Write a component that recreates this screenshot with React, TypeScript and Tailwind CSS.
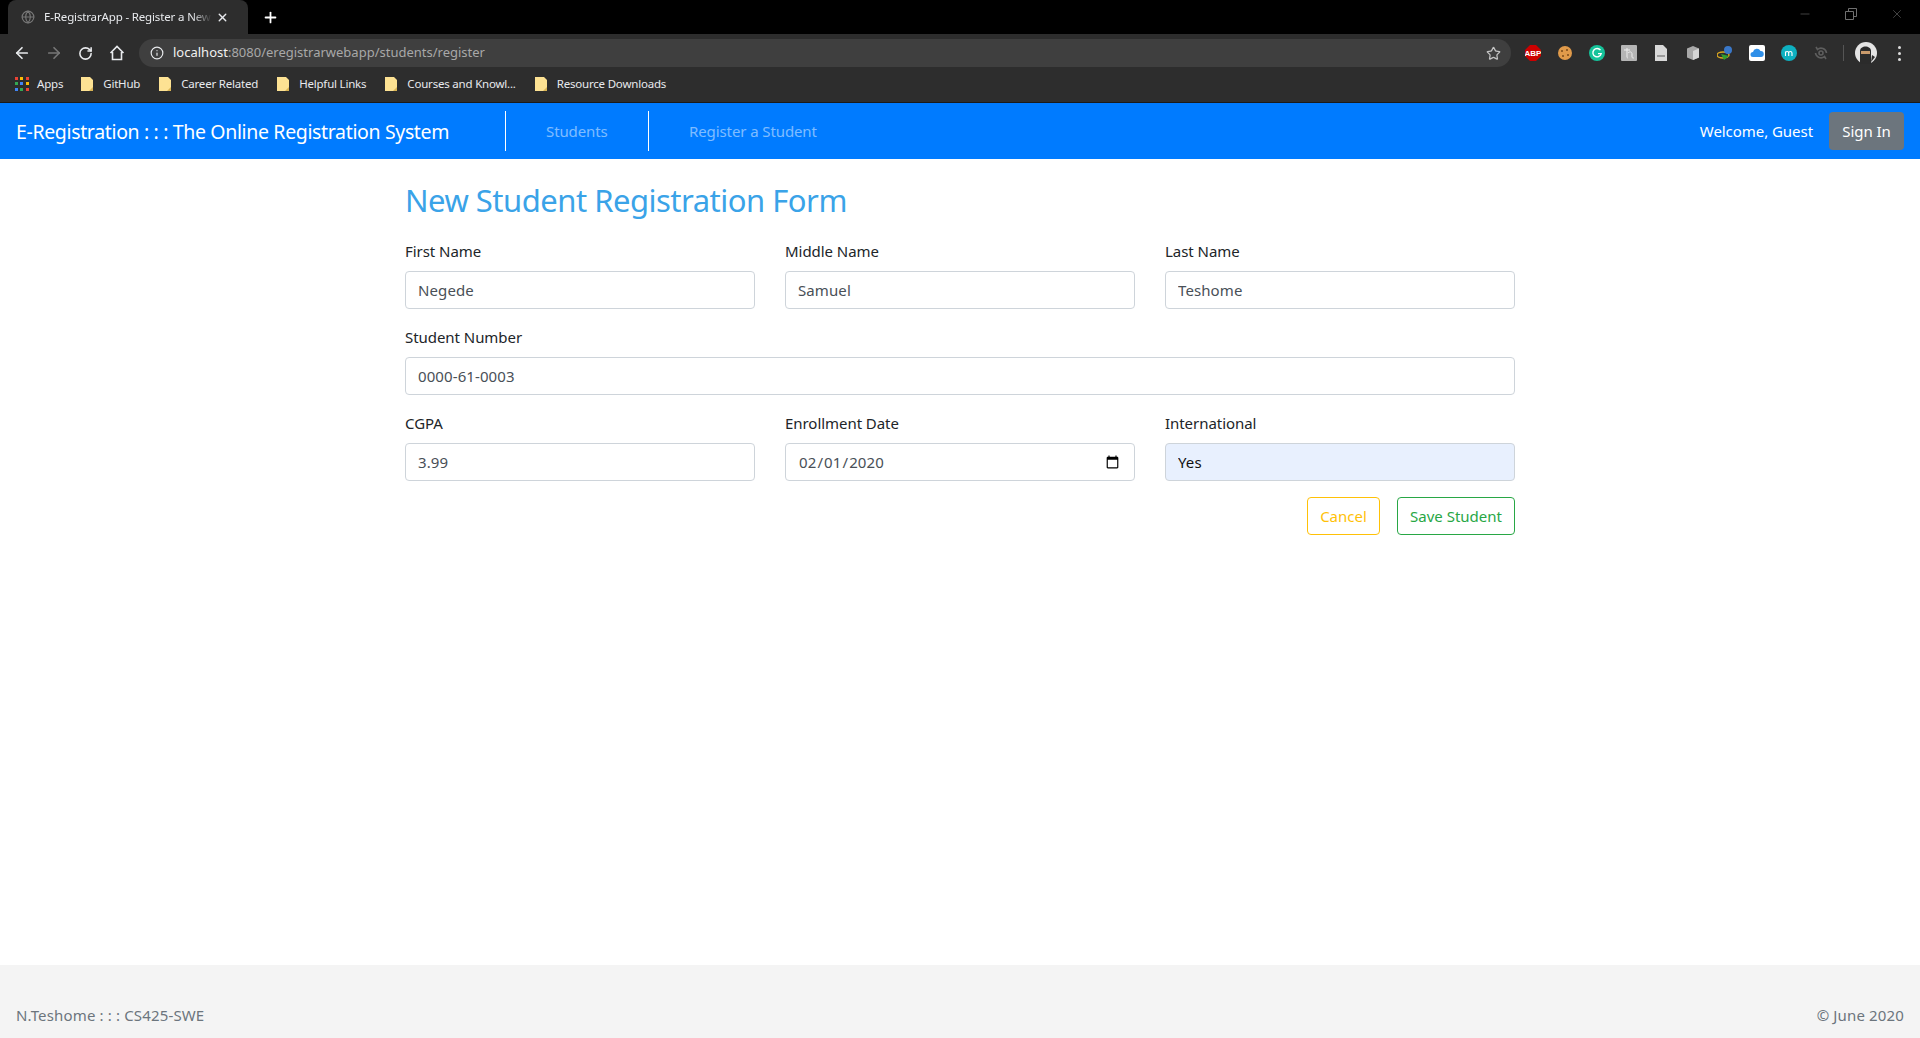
import { ArrowLeft, ArrowRight, RotateCw, Info, Star, X, Plus, Minus, Globe } from "lucide-react";

const bookmarks = ["GitHub", "Career Related", "Helpful Links", "Courses and Knowl...", "Resource Downloads"];

function Folder() {
  return (
    <svg width="12" height="14" viewBox="0 0 12 14" className="shrink-0">
      <path d="M0 0h9l3 3v11H0z" fill="#fde293" />
      <path d="M12 10v4H8z" fill="#d9b454" />
    </svg>
  );
}

function AppsGrid() {
  const colors = ["#ea4335", "#fbbc04", "#ea4335", "#34a853", "#4285f4", "#fbbc04", "#4285f4", "#34a853", "#ea4335"];
  return (
    <div className="grid grid-cols-3 gap-[2px] w-[14px] h-[14px] shrink-0">
      {colors.map((c, i) => (
        <span key={i} className="w-[3px] h-[3px]" style={{ backgroundColor: c }} />
      ))}
    </div>
  );
}

function ExtensionIcons() {
  return (
    <div className="flex items-center gap-[16px] ml-[14px]">
      <svg width="16" height="16" viewBox="0 0 16 16">
        <path d="M5 0h6l5 5v6l-5 5H5l-5-5V5z" fill="#c00" />
        <text x="8" y="11" textAnchor="middle" fontSize="8" fontWeight="700" fill="#fff" fontFamily="Liberation Sans">ABP</text>
      </svg>
      <svg width="16" height="16" viewBox="0 0 16 16">
        <circle cx="8" cy="8" r="7" fill="#e09a4a" />
        <circle cx="5" cy="6" r="1" fill="#7a4a1a" />
        <circle cx="10" cy="5" r="1" fill="#7a4a1a" />
        <circle cx="11" cy="10" r="1" fill="#7a4a1a" />
        <circle cx="6" cy="11" r="1" fill="#7a4a1a" />
      </svg>
      <svg width="16" height="16" viewBox="0 0 16 16">
        <circle cx="8" cy="8" r="8" fill="#15c39a" />
        <path d="M11.500 5.200A4.200 4.200 0 1 0 12.200 8.600H9" fill="none" stroke="#fff" strokeWidth="1.400" />
      </svg>
      <svg width="16" height="16" viewBox="0 0 16 16">
        <rect width="16" height="16" rx="1" fill="#b5b5b5" />
        <path d="M3 5h6M6 3v9c0 1 1 1 1 1M7 8c2-2 4-1 4 1v3c0 1 1 1 2 1" fill="none" stroke="#eee" strokeWidth="1" />
      </svg>
      <svg width="16" height="16" viewBox="0 0 16 16">
        <path d="M2 0h8l4 4v12H2z" fill="#d8d8d8" />
        <rect x="4" y="10" width="8" height="2" fill="#9a9a9a" />
      </svg>
      <svg width="16" height="16" viewBox="0 0 16 16">
        <path d="M8 1l6 2.500v9L8 15l-6-2.500v-9z" fill="#a8a8a8" />
        <path d="M8 6l6-2.500v9L8 15z" fill="#d5d5d5" />
      </svg>
      <svg width="16" height="16" viewBox="0 0 16 16">
        <ellipse cx="6" cy="10" rx="6" ry="3" fill="none" stroke="#d9a520" strokeWidth="1.500" />
        <circle cx="11" cy="5" r="4" fill="#3a78c9" />
        <path d="M4 9l8 2-5 4z" fill="#2f9e2f" />
      </svg>
      <svg width="16" height="16" viewBox="0 0 16 16">
        <rect width="16" height="16" rx="2" fill="#fff" />
        <path d="M4 12a2.500 2.500 0 0 1 0-5 4 4 0 0 1 7.500-1A3 3 0 0 1 12 12z" fill="#2f8fe8" />
      </svg>
      <svg width="16" height="16" viewBox="0 0 16 16">
        <circle cx="8" cy="8" r="8" fill="#0eb0c0" />
        <path d="M4.500 11V6.500M4.500 8c0-2 3.200-2 3.200 0v3M7.700 8c0-2 3.300-2 3.300 0v3" fill="none" stroke="#fff" strokeWidth="1.100" />
      </svg>
      <svg width="16" height="16" viewBox="0 0 16 16" fill="none" stroke="#5e5e5e" strokeWidth="1.600">
        <path d="M3 2l1.500 2.500A5.500 5.500 0 0 1 13.500 8M13 14l-1.500-2.500A5.500 5.500 0 0 1 2.500 8" />
        <circle cx="8" cy="8" r="2" />
      </svg>
      <div className="w-px h-4 bg-[#555] ml-[-2px]" />
      <svg width="22" height="22" viewBox="0 0 22 22" className="ml-[-5px]">
        <circle cx="11" cy="11" r="11" fill="#e4e4e4" />
        <path d="M5 22V9c0-6 11-6 11 0v13z" fill="#2b2b2b" />
        <rect x="6" y="9" width="9" height="3" fill="#c99a6b" />
        <path d="M17 13l3 2-4 5z" fill="#2b2b2b" />
      </svg>
      <div className="flex flex-col gap-[3px] ml-[5px]">
        <span className="w-[3px] h-[3px] rounded-full bg-[#ddd]" />
        <span className="w-[3px] h-[3px] rounded-full bg-[#ddd]" />
        <span className="w-[3px] h-[3px] rounded-full bg-[#ddd]" />
      </div>
    </div>
  );
}

function BrowserChrome() {
  return (
    <div className="font-['Noto_Sans',sans-serif] text-[#e8eaed]">
      <div className="h-[34px] bg-black flex items-end pl-2">
        <div className="w-[240px] h-[34px] bg-[#2d2d2d] rounded-t-lg flex items-center pl-[13px] pr-[11px]">
          <Globe size={14} className="text-[#777] shrink-0" />
          <span className="ml-[9px] w-[168px] overflow-hidden whitespace-nowrap text-[11.5px] tracking-[-0.15px] [mask-image:linear-gradient(to_right,black_88%,transparent)]">E-RegistrarApp - Register a New S</span>
          <X size={13} strokeWidth={2.5} className="ml-[4px] shrink-0" />
        </div>
        <div className="h-[34px] flex items-center ml-[14px]">
          <Plus size={17} strokeWidth={2.5} className="text-white" />
        </div>
        <div className="ml-auto h-[34px] flex items-start pt-[7px] pr-[16px] gap-[32px] text-[#707070]">
          <Minus size={14} strokeWidth={1} />
          <svg width="14" height="14" viewBox="0 0 14 14" fill="none" stroke="currentColor">
            <path d="M1.500 4.500h8v8h-8zM4.500 4.500v-3h8v8h-3" />
          </svg>
          <X size={14} strokeWidth={1} />
        </div>
      </div>
      <div className="h-[36px] pt-[2px] bg-[#2d2d2d] flex items-center pl-[13px] pr-[19px]">
        <ArrowLeft size={18} strokeWidth={2.25} className="shrink-0" />
        <ArrowRight size={18} strokeWidth={2.25} className="ml-[14px] text-[#777] shrink-0" />
        <RotateCw size={15} strokeWidth={2.5} className="ml-[15px] shrink-0" />
        <svg width="16" height="16" viewBox="0 0 16 16" fill="none" stroke="currentColor" strokeWidth="1.600" className="ml-[16px] shrink-0">
          <path d="M1.500 8L8 1.500 14.500 8M3.500 7v7.500h9V7" />
        </svg>
        <div className="ml-[14px] h-[28px] flex-1 bg-[#3f3f3f] rounded-full flex items-center pl-[11px] pr-[10px]">
          <Info size={14} className="shrink-0" />
          <span className="ml-[9px] text-[13px] tracking-[0px] text-[#a8a8a8]">
            <span className="text-[#f1f1f1]">localhost</span>:8080/eregistrarwebapp/students/register
          </span>
          <Star size={15} className="ml-auto text-[#c4c4c4]" />
        </div>
        <ExtensionIcons />
      </div>
      <div className="h-[33px] pb-[4px] bg-[#2d2d2d] border-b border-[#1a1a1a] flex items-center pl-[15px] text-[11.5px] tracking-[-0.2px]">
        <AppsGrid />
        <span className="ml-[8px] mr-[18px]">Apps</span>
        {bookmarks.map((name) => (
          <div key={name} className="flex items-center gap-[10px] mr-[19px]">
            <Folder />
            <span>{name}</span>
          </div>
        ))}
      </div>
    </div>
  );
}

function Field({ label, value, type = "text", filled = false }: { label: string; value: string; type?: string; filled?: boolean }) {
  return (
    <div className="flex flex-col">
      <label className="h-[24px] leading-[24px] mb-[8px] text-[15px] tracking-[-0.05px] text-[#212529]">{label}</label>
      <input
        type={type}
        defaultValue={value}
        className={`h-[38px] px-[12px] border border-[#ced4da] rounded text-[15px] tracking-[0.1px] outline-none ${filled ? "bg-[#e8f0fe] text-[#111]" : "bg-white text-[#495057]"}`}
      />
    </div>
  );
}

export default function App() {
  return (
    <div className="min-h-[1038px] flex flex-col bg-white font-['Noto_Sans',sans-serif]">
      <BrowserChrome />

      <nav className="h-[56px] bg-[#007bff] flex items-center pl-4 pr-4">
        <span className="w-[489px] pt-px text-[19.5px] tracking-[-0.35px] text-white">E-Registration : : : The Online Registration System</span>
        <div className="h-[40px] w-px bg-white" />
        <span className="ml-[40px] w-[102px] text-[15px] tracking-[-0.1px] text-white/50">Students</span>
        <div className="h-[40px] w-px bg-white" />
        <span className="ml-[40px] text-[15px] tracking-[-0.1px] text-white/50">Register a Student</span>
        <span className="ml-auto text-[15px] tracking-[-0.05px] text-white">Welcome, Guest</span>
        <button className="ml-[16px] w-[75px] h-[38px] rounded bg-[#6c757d] text-white text-[15px] tracking-[-0.05px]">Sign In</button>
      </nav>

      <main className="flex-1 w-[1110px] mx-auto">
        <h1 className="mt-[21px] mb-[19px] h-[40px] leading-[40px] text-[31px] tracking-[-0.5px] text-[#3aa3e8]">New Student Registration Form</h1>
        <div className="grid grid-cols-3 gap-x-[30px] gap-y-[16px]">
          <Field label="First Name" value="Negede" />
          <Field label="Middle Name" value="Samuel" />
          <Field label="Last Name" value="Teshome" />
          <div className="col-span-3">
            <Field label="Student Number" value="0000-61-0003" />
          </div>
          <Field label="CGPA" value="3.99" />
          <Field label="Enrollment Date" value="2020-02-01" type="date" />
          <Field label="International" value="Yes" filled />
        </div>
        <div className="flex justify-end gap-[17px] mt-[16px]">
          <button className="w-[73px] h-[38px] rounded border border-[#ffc107] text-[#ffc107] text-[15px] tracking-[0px]">Cancel</button>
          <button className="w-[118px] h-[38px] rounded border border-[#28a745] text-[#28a745] text-[15px] tracking-[0px]">Save Student</button>
        </div>
      </main>

      <footer className="h-[73px] bg-[#f4f4f4] flex items-end justify-between px-4 pb-[12px] text-[15px] tracking-[0.15px] text-[#6c757d]">
        <span>N.Teshome : : : CS425-SWE</span>
        <span>© June 2020</span>
      </footer>
    </div>
  );
}
